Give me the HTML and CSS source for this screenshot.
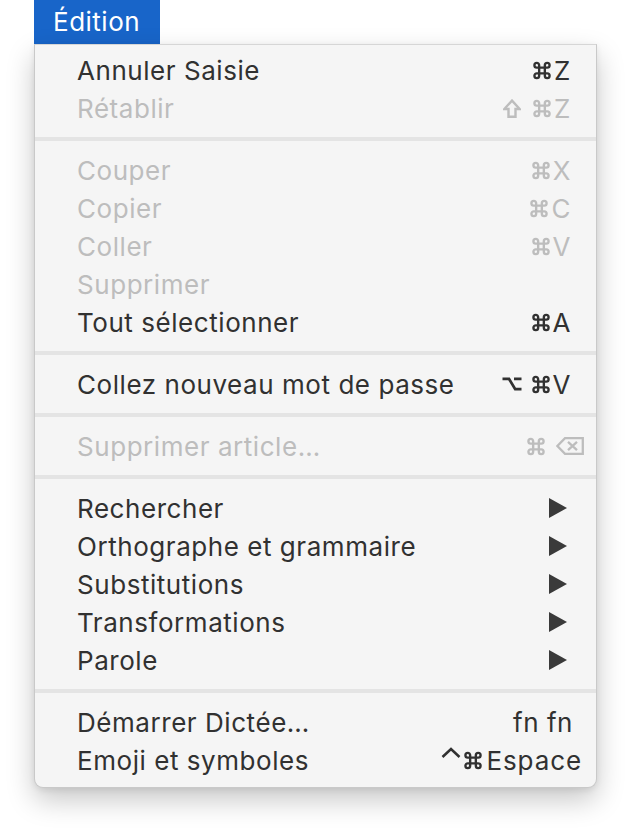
FILE: index.html
```html
<!DOCTYPE html>
<html lang="fr">
<head>
<meta charset="utf-8">
<title>Édition</title>
<link rel="stylesheet" href="styles.css">
</head>
<body>
<div class="page">
  <div class="title">Édition</div>
  <div class="menu">
    <div class="item"><span class="label">Annuler Saisie</span><span class="key"><svg class="cmd" viewBox="-0.5 -0.5 19 19"><path d="M6 6V3.5A2.5 2.5 0 1 0 3.5 6H14.5A2.5 2.5 0 1 0 12 3.5V14.5A2.5 2.5 0 1 0 14.5 12H3.5A2.5 2.5 0 1 0 6 14.5Z"/></svg><span class="k">Z</span></span></div>
    <div class="item off"><span class="label">Rétablir</span><span class="key"><svg class="shift" viewBox="0 0 18 19"><path d="M9 1.6L16.7 10H12.5V17.8H5.5V10H1.3Z"/></svg><svg class="cmd" viewBox="-0.5 -0.5 19 19"><path d="M6 6V3.5A2.5 2.5 0 1 0 3.5 6H14.5A2.5 2.5 0 1 0 12 3.5V14.5A2.5 2.5 0 1 0 14.5 12H3.5A2.5 2.5 0 1 0 6 14.5Z"/></svg><span class="k">Z</span></span></div>
    <div class="sep"></div>
    <div class="item off"><span class="label">Couper</span><span class="key"><svg class="cmd" viewBox="-0.5 -0.5 19 19"><path d="M6 6V3.5A2.5 2.5 0 1 0 3.5 6H14.5A2.5 2.5 0 1 0 12 3.5V14.5A2.5 2.5 0 1 0 14.5 12H3.5A2.5 2.5 0 1 0 6 14.5Z"/></svg><span class="k">X</span></span></div>
    <div class="item off"><span class="label">Copier</span><span class="key"><svg class="cmd" viewBox="-0.5 -0.5 19 19"><path d="M6 6V3.5A2.5 2.5 0 1 0 3.5 6H14.5A2.5 2.5 0 1 0 12 3.5V14.5A2.5 2.5 0 1 0 14.5 12H3.5A2.5 2.5 0 1 0 6 14.5Z"/></svg><span class="k">C</span></span></div>
    <div class="item off"><span class="label">Coller</span><span class="key"><svg class="cmd" viewBox="-0.5 -0.5 19 19"><path d="M6 6V3.5A2.5 2.5 0 1 0 3.5 6H14.5A2.5 2.5 0 1 0 12 3.5V14.5A2.5 2.5 0 1 0 14.5 12H3.5A2.5 2.5 0 1 0 6 14.5Z"/></svg><span class="k">V</span></span></div>
    <div class="item off"><span class="label">Supprimer</span></div>
    <div class="item"><span class="label">Tout sélectionner</span><span class="key"><svg class="cmd" viewBox="-0.5 -0.5 19 19"><path d="M6 6V3.5A2.5 2.5 0 1 0 3.5 6H14.5A2.5 2.5 0 1 0 12 3.5V14.5A2.5 2.5 0 1 0 14.5 12H3.5A2.5 2.5 0 1 0 6 14.5Z"/></svg><span class="k">A</span></span></div>
    <div class="sep"></div>
    <div class="item"><span class="label">Collez nouveau mot de passe</span><span class="key"><svg class="opt" viewBox="0 0 20 14"><path d="M0.5 1.8H7L13.2 12.2H19.5M12 1.8H19.5"/></svg><svg class="cmd" viewBox="-0.5 -0.5 19 19"><path d="M6 6V3.5A2.5 2.5 0 1 0 3.5 6H14.5A2.5 2.5 0 1 0 12 3.5V14.5A2.5 2.5 0 1 0 14.5 12H3.5A2.5 2.5 0 1 0 6 14.5Z"/></svg><span class="k">V</span></span></div>
    <div class="sep"></div>
    <div class="item off"><span class="label">Supprimer article…</span><span class="key wide"><svg class="cmd" viewBox="-0.5 -0.5 19 19"><path d="M6 6V3.5A2.5 2.5 0 1 0 3.5 6H14.5A2.5 2.5 0 1 0 12 3.5V14.5A2.5 2.5 0 1 0 14.5 12H3.5A2.5 2.5 0 1 0 6 14.5Z"/></svg><svg class="del" viewBox="0 0 28 18"><path d="M9 1.2H26.8V16.8H9L1.4 9Z"/><path d="M12 4.8L21 13.2M21 4.8L12 13.2"/></svg></span></div>
    <div class="sep"></div>
    <div class="item"><span class="label">Rechercher</span><span class="arrow"></span></div>
    <div class="item"><span class="label">Orthographe et grammaire</span><span class="arrow"></span></div>
    <div class="item"><span class="label">Substitutions</span><span class="arrow"></span></div>
    <div class="item"><span class="label">Transformations</span><span class="arrow"></span></div>
    <div class="item"><span class="label">Parole</span><span class="arrow"></span></div>
    <div class="sep"></div>
    <div class="item"><span class="label">Démarrer Dictée…</span><span class="key fn">fn fn</span></div>
    <div class="item"><span class="label">Emoji et symboles</span><span class="key space"><svg class="ctrl" viewBox="0 0 20 18"><path d="M1.5 10L10 2L18.5 10"/></svg><svg class="cmd" viewBox="-0.5 -0.5 19 19"><path d="M6 6V3.5A2.5 2.5 0 1 0 3.5 6H14.5A2.5 2.5 0 1 0 12 3.5V14.5A2.5 2.5 0 1 0 14.5 12H3.5A2.5 2.5 0 1 0 6 14.5Z"/></svg><span class="k">Espace</span></span></div>
  </div>
</div>
</body>
</html>
```
FILE: styles.css
```css
html, body {
  margin: 0;
  padding: 0;
  background: #ffffff;
}
body {
  font-family: Inter, "Liberation Sans", sans-serif;
  width: 636px;
  height: 830px;
  overflow: hidden;
}
.page {
  padding-left: 34px;
}
.title {
  width: 126px;
  height: 44px;
  background: #1865c9;
  color: #ffffff;
  font-size: 26px;
  letter-spacing: 0.5px;
  line-height: 44px;
  box-sizing: border-box;
  padding-left: 19px;
}
.menu {
  width: 563px;
  box-sizing: border-box;
  background: #f5f5f5;
  border: 1px solid #c9c9c9;
  border-top-color: #d6d6d6;
  border-radius: 0 0 9px 9px;
  padding: 6px 0 8px;
  box-shadow: 0 12px 28px rgba(0, 0, 0, 0.22), 0 2px 6px rgba(0, 0, 0, 0.08);
}
.item {
  height: 38px;
  display: flex;
  align-items: center;
  justify-content: space-between;
  padding: 0 25px 0 42px;
  font-size: 26px;
  letter-spacing: 0.55px;
  color: #313131;
}
.item.off {
  color: #bdbdbd;
}
.key {
  display: flex;
  align-items: center;
  white-space: nowrap;
}
.key svg {
  fill: none;
  stroke: currentColor;
  stroke-width: 2.5;
  display: block;
  flex-shrink: 0;
}
.cmd {
  width: 18px;
  height: 19px;
  margin-right: 3px;
  margin-top: 1px;
}
.shift {
  width: 18px;
  height: 19px;
  margin-right: 12px;
  margin-top: 1px;
}
.shift path {
  stroke-width: 2.4;
}
.opt {
  width: 20px;
  height: 14px;
  margin-right: 10px;
}
.opt path {
  stroke-width: 2.8;
}
.del {
  width: 28px;
  height: 18px;
  margin-left: 11px;
}
.del path {
  stroke-width: 2.3;
}
.ctrl {
  width: 20px;
  height: 18px;
  margin-right: 3px;
  margin-top: -8px;
}
.key.wide {
  margin-right: -13px;
}
.key.wide .cmd {
  margin-right: 0;
}
.key.fn {
  margin-right: -2px;
}
.key.space {
  margin-right: -11px;
}
.key.space .cmd {
  margin-right: 4px;
}
.key.space .k {
  letter-spacing: 0.9px;
}
.arrow {
  width: 0;
  height: 0;
  border-top: 10px solid transparent;
  border-bottom: 10px solid transparent;
  border-left: 18px solid #3a3a3a;
  margin-right: 4px;
}
.sep {
  height: 24px;
  display: flex;
  align-items: center;
}
.sep::before {
  content: "";
  display: block;
  width: 100%;
  height: 4px;
  background: #e4e4e4;
}
```
